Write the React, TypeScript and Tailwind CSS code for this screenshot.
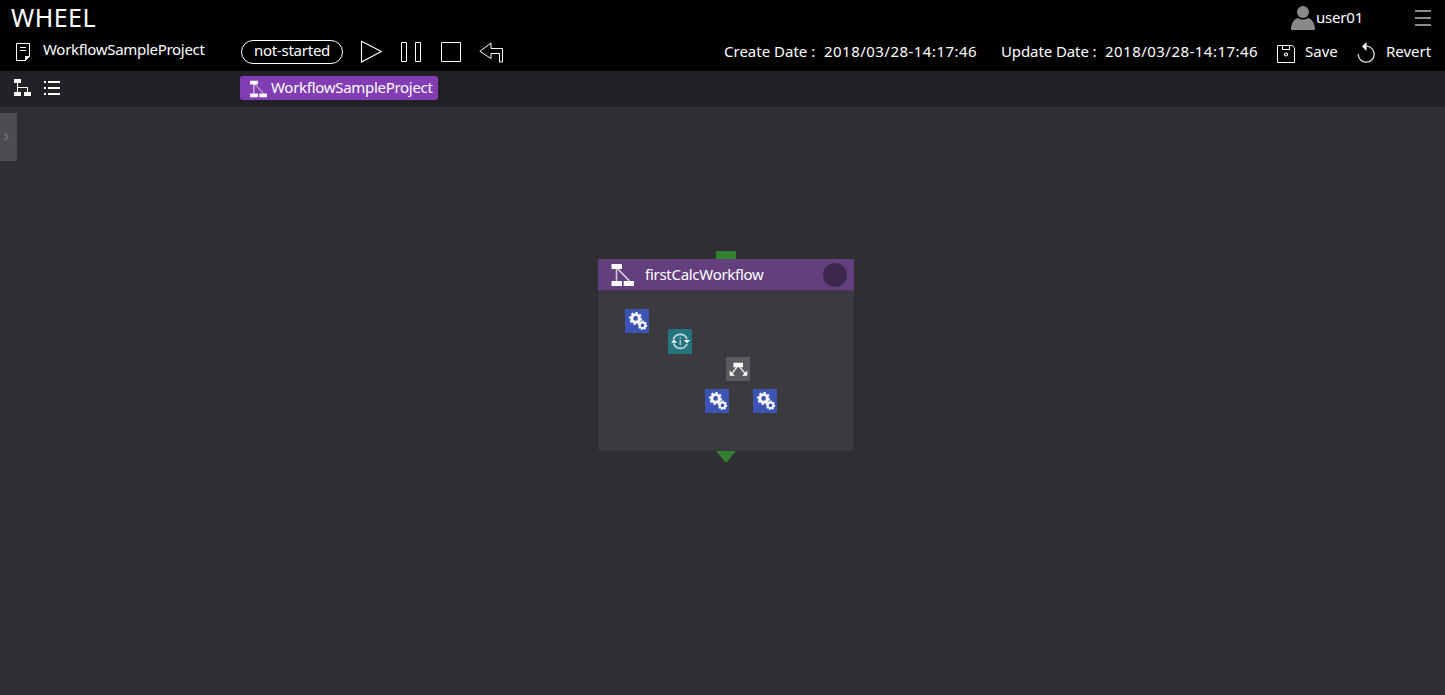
import React from 'react';

const FONT = 'font-["Noto_Sans",sans-serif]';

function WorkflowGlyph({ className }: { className?: string }) {
  return (
    <svg className={className} viewBox="0 0 24 24" fill="none">
      <path d="M6.5 5V18" stroke="#fff" strokeOpacity=".7" strokeWidth="1.6" />
      <path d="M7 5L19.5 18" stroke="#fff" strokeOpacity=".9" strokeWidth="1.2" />
      <path d="M1.5 1H12v5H1.5zM1.5 18H12v5H1.5zM13.7 18H24v5H13.7z" fill="#fff" />
    </svg>
  );
}

function Gear({ x, y, r, hole }: { x: number; y: number; r: number; hole: number }) {
  const ring = (r * 0.8 + hole) / 2;
  const teeth = [0, 45, 90, 135];
  return (
    <g transform={`translate(${x} ${y})`} stroke="#fff" fill="none">
      <circle r={ring} strokeWidth={r * 0.8 - hole} />
      {teeth.map((a) => (
        <path
          key={a}
          d={`M0 ${-r}V${-r * 0.7}M0 ${r * 0.7}V${r}`}
          strokeWidth={r * 0.36}
          transform={`rotate(${a + 10})`}
        />
      ))}
    </g>
  );
}

function TaskIcon() {
  return (
    <svg className="block size-6 bg-[#3c55b4]" viewBox="0 0 24 24">
      <Gear x={10.6} y={9.4} r={6.5} hole={2.4} />
      <Gear x={17.5} y={16.3} r={4.7} hole={1.9} />
    </svg>
  );
}

function LoopIcon() {
  return (
    <svg className="block h-[25px] w-6 bg-[#257580]" viewBox="0 0 24 25" fill="none">
      <path d="M5.4 10.5A7.2 7.2 0 0 1 19 10M19 15A7.2 7.2 0 0 1 5.6 14.6" stroke="#c5dcde" strokeWidth="1.6" />
      <path d="M3 13.8L6 10.4L9 13.8zM15.8 11H22L19 14.2z" fill="#fff" />
      <path d="M12.3 11v5M12.3 8.3v1.5" stroke="#a9cacd" strokeWidth="1.6" />
    </svg>
  );
}

function ForkIcon() {
  return (
    <svg className="block size-6 bg-[#5b5a5e]" viewBox="0 0 24 24" fill="none">
      <path d="M7.4 5.8H17v4.5H7.4z" fill="#fff" />
      <path d="M11 10L5.5 17M13.7 10L19.5 17" stroke="#ddd" strokeWidth="1.5" />
      <path d="M3.7 13.5v5.2h5.1zM21.2 13.5v5.2h-5.1z" fill="#fff" />
    </svg>
  );
}

function Header() {
  return (
    <header className="flex h-[71px] shrink-0 flex-col bg-black text-white">
      <div className="flex h-9 items-center">
        <h1 className="ml-[11px] w-[100px] pb-0.5 text-[25px] leading-[34px] tracking-[0.45px]">WHEEL</h1>
        <svg className="ml-auto h-6 w-6 shrink-0" viewBox="0 0 24 24" fill="#898989">
          <circle cx="12" cy="6" r="6" />
          <path d="M0 24C0 17 3 13 7 12Q12 15 17 12C21 13 24 17 24 24z" />
        </svg>
        <span className="ml-[1px] w-[47px] whitespace-nowrap pb-0.5 text-[15px] leading-5 tracking-[-0.2px]">user01</span>
        <svg className="mr-[14px] ml-[52px] h-4 w-4 shrink-0" viewBox="0 0 16 16" fill="#898989">
          <path d="M0 0h16v2H0zM0 7h16v2H0zM0 14h16v2H0z" />
        </svg>
      </div>

      <div className="flex h-[35px] items-start whitespace-nowrap text-[15px] leading-5">
        <svg className="mt-[7px] ml-4 h-[18px] w-[14px] shrink-0" viewBox="0 0 14 18" fill="none">
          <path d="M.5 .5h13v13l-4 4H.5zM4 4.5h6M4 7.5h6" stroke="#fff" />
          <path d="M9 18v-5h5z" fill="#fff" />
        </svg>
        <span className="mt-[3px] ml-[13px] w-[198px] tracking-[-0.29px]">WorkflowSampleProject</span>
        <span className="mt-1 flex h-6 w-[102px] shrink-0 justify-center rounded-full border border-white leading-[19px] tracking-[-0.25px]">
          not-started
        </span>
        <svg className="ml-[17px] h-7 w-[150px] shrink-0" viewBox="0 0 150 28" fill="none" stroke="#fff">
          <path d="M1.5 5.3L21.3 15.5L1.5 26z" strokeWidth="1.1" />
          <path d="M41.5 6.5h5v19h-5zM55.5 6.5h5v19h-5zM81.5 6.5h19v19h-19z" />
          <path d="M131 7L119.8 15.3L131 22.5V17.5H139.5V26H142.5V12.5H131z" />
        </svg>
        <span className="mt-[5px] ml-auto w-[277px]">
          <span className="inline-block w-[100px]">Create Date :</span>
          <span className="tracking-[0.47px]">2018/03/28-14:17:46</span>
        </span>
        <span className="mt-[5px] w-[276px]">
          <span className="inline-block w-[104px] tracking-[-0.1px]">Update Date :</span>
          <span className="tracking-[0.47px]">2018/03/28-14:17:46</span>
        </span>
        <svg className="mt-[9px] h-[18px] w-[18px] shrink-0" viewBox="0 0 18 18" fill="none" stroke="#fff">
          <path d="M.5 .5h14.7l2.3 2.3v14.7H.5zM5.5 .5v4h7v-4" />
          <circle cx="9" cy="9.5" r="1.5" strokeWidth="1.2" />
        </svg>
        <span className="mt-[5px] ml-[10px] w-[51px]">Save</span>
        <svg className="mt-[6px] h-[21px] w-[19px] shrink-0" viewBox="0 0 19 21" fill="none">
          <path d="M2.2 12A8 8 0 1 0 10.3 4.2" stroke="#ddd" strokeWidth="1.3" />
          <path d="M10.5 0v9L6 4.5z" fill="#fff" />
        </svg>
        <span className="mt-[5px] ml-[11px] w-[59px]">Revert</span>
      </div>
    </header>
  );
}

function Toolbar() {
  return (
    <nav className="flex h-9 shrink-0 items-start bg-[#222126] text-white">
      <svg className="mt-2 ml-[14px] h-[17px] w-[17px] shrink-0" viewBox="0 0 17 17" fill="#fff">
        <path d="M0 0h7v4H0zM0 13h7v4H0zM10 13h7v4h-7zM3 4h1v9H3zM4 8h10v1H4zM13 9h1v4h-1z" />
      </svg>
      <svg className="mt-[10px] ml-[13px] h-[14px] w-4 shrink-0" viewBox="0 0 16 14" fill="#fff">
        <path d="M0 0h2v2H0zM4 0h12v2H4zM0 6h2v2H0zM4 6h12v2H4zM0 12h2v2H0zM4 12h12v2H4z" />
      </svg>
      <div className="mt-[5px] ml-[180px] flex h-6 w-[198px] items-center rounded-[3px] bg-[#823db4]">
        <WorkflowGlyph className="mt-[2px] ml-[9px] size-[18px] shrink-0" />
        <span className="ml-1 whitespace-nowrap pb-0.5 text-[15px] leading-[22px] tracking-[-0.29px]">WorkflowSampleProject</span>
      </div>
    </nav>
  );
}

function WorkflowNode() {
  return (
    <section className="absolute top-[144px] left-[598px] flex w-64 flex-col items-center">
      <div className="h-2 w-5 bg-[#348032]" />
      <div className="flex h-8 w-64 items-center border-b border-[#4c3a5c] bg-[#63407d] text-white">
        <WorkflowGlyph className="ml-3 size-6 shrink-0" />
        <span className="ml-[11px] whitespace-nowrap pb-0.5 text-[15px] leading-5 tracking-[-0.28px]">firstCalcWorkflow</span>
        <span className="mr-[7px] ml-auto size-6 rounded-full bg-[#3c284c]" />
      </div>
      <div className="relative h-40 w-64 border border-[#38373b] bg-[#3b3a3e]">
        <div className="absolute top-[17px] left-[26.4px]"><TaskIcon /></div>
        <div className="absolute top-[37px] left-[69.4px]"><LoopIcon /></div>
        <div className="absolute top-[65px] left-[127.4px]"><ForkIcon /></div>
        <div className="absolute top-[97px] left-[106.4px]"><TaskIcon /></div>
        <div className="absolute top-[97px] left-[154px]"><TaskIcon /></div>
      </div>
      <svg className="h-3 w-5" viewBox="0 0 20 12" fill="#348032">
        <path d="M0 0h20L10 12z" />
      </svg>
    </section>
  );
}

export default function App() {
  return (
    <div className={`flex h-[695px] w-[1445px] flex-col overflow-hidden bg-[#2f2e33] ${FONT}`}>
      <Header />
      <Toolbar />
      <main className="relative flex-1 bg-[#2f2e33]">
        <button className="mt-[6px] flex h-12 w-[17px] items-center bg-[#4c4c53]">
          <svg className="ml-[4px] h-2 w-[5px]" viewBox="0 0 5 8" fill="none">
            <path d="M.5 .5L4 4L.5 7.5" stroke="#77777c" strokeWidth="1.3" />
          </svg>
        </button>
        <WorkflowNode />
      </main>
    </div>
  );
}
